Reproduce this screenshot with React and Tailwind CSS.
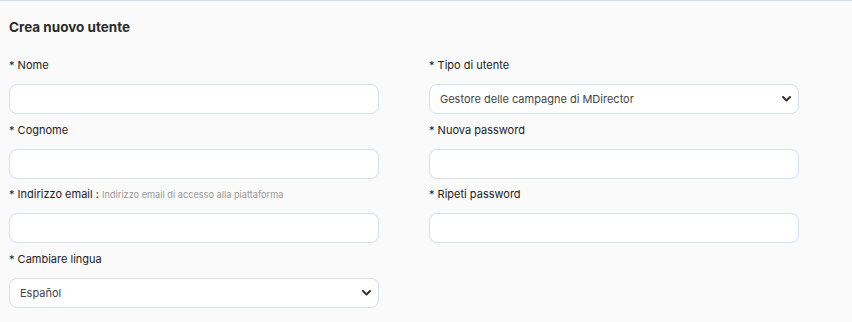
function Field({ label, hint, children }) {
  return (
    <div className="flex flex-col">
      <label className="h-[19px] whitespace-nowrap text-[11px] leading-[19px] text-[#222]">
        * {label}
        {hint && (
          <span>
            {" "}: <span className="text-[9.2px] text-[#999]">{hint}</span>
          </span>
        )}
      </label>
      <div className="mt-[9px]">{children}</div>
    </div>
  );
}

function TextInput({ type = "text" }) {
  return (
    <input
      type={type}
      className="block h-[30px] w-full rounded-[8px] border border-[#d3e0ee] bg-white px-3 text-[11px] outline-none"
    />
  );
}

function Select({ value }) {
  return (
    <div className="relative h-[30px] w-full rounded-[8px] border border-[#d3e0ee] bg-white">
      <div className="flex h-full items-center pl-[10px] text-[11px] text-[#444]">
        {value}
      </div>
      <svg
        className="absolute right-[7px] top-[11px]"
        width="9"
        height="6"
        viewBox="0 0 9 6"
        fill="none"
      >
        <path
          d="M1 1l3.5 3.5L8 1"
          stroke="#333"
          strokeWidth="2"
          strokeLinecap="round"
          strokeLinejoin="round"
        />
      </svg>
    </div>
  );
}

export default function App() {
  return (
    <div
      className="h-[322px] w-[852px] border-t border-[#cfdcec] bg-[#fafafa] pl-[9px] pt-[17px]"
      style={{ fontFamily: "Inter, 'Noto Sans', sans-serif" }}
    >
      <h1 className="h-[18px] text-[13.5px] font-bold leading-[18px] text-[#2b2b2b]">
        Crea nuovo utente
      </h1>
      <div className="mt-[20px] grid w-[790px] grid-cols-2 gap-x-[50px] gap-y-[6.6px]">
        <Field label="Nome">
          <TextInput />
        </Field>
        <Field label="Tipo di utente">
          <Select value="Gestore delle campagne di MDirector" />
        </Field>
        <Field label="Cognome">
          <TextInput />
        </Field>
        <Field label="Nuova password">
          <TextInput type="password" />
        </Field>
        <Field
          label="Indirizzo email"
          hint="Indirizzo email di accesso alla piattaforma"
        >
          <TextInput type="email" />
        </Field>
        <Field label="Ripeti password">
          <TextInput type="password" />
        </Field>
        <Field label="Cambiare lingua">
          <Select value="Español" />
        </Field>
      </div>
    </div>
  );
}
